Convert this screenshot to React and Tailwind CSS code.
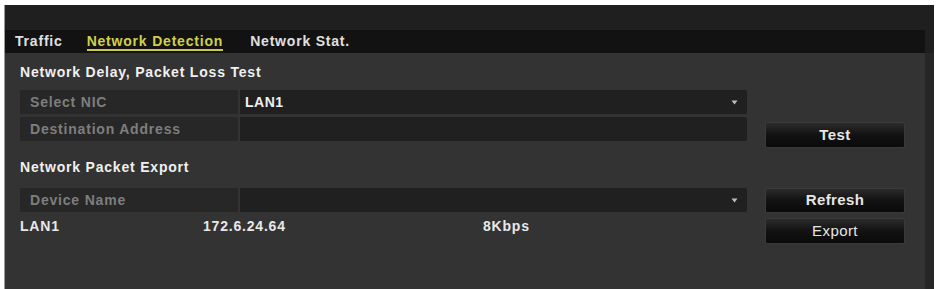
const font = { fontFamily: '"Liberation Sans", Arial, sans-serif' };

function Arrow() {
  return (
    <svg width="7" height="5" viewBox="0 0 7 5" className="shrink-0">
      <path d="M0.5 0.5 L6.5 0.5 L3.5 4.5 Z" fill="#bdbdbd" />
    </svg>
  );
}

function FieldRow({ label, value, dropdown, className = "" }) {
  return (
    <div className={`flex h-[24px] ${className}`}>
      <div className="flex w-[218px] items-center bg-[#272727] pl-[10px] text-[14px] font-bold tracking-[0.8px] text-[#7e7e7e]">
        {label}
      </div>
      <div className="ml-[2px] flex flex-1 items-center rounded-r-[2px] bg-[#202020] pl-[5px] pr-[9px] text-[14px] font-bold tracking-[0.5px] text-[#f0f0f0]">
        <span className="flex-1">{value}</span>
        {dropdown && <Arrow />}
      </div>
    </div>
  );
}

function Btn({ children, className = "" }) {
  return (
    <button
      type="button"
      className={`flex w-[140px] items-center justify-center rounded-[2px] border border-[#3a3a3a] bg-gradient-to-b from-[#2c2c2c] via-[#121212] to-[#0a0a0a] text-[15px] font-bold tracking-[0.4px] text-[#e6e6e6] ${className}`}
    >
      {children}
    </button>
  );
}

export default function App() {
  return (
    <div className="h-[289px] w-[940px] overflow-hidden bg-white pl-[4px] pr-[6px] pt-[5px]" style={font}>
      <div className="flex h-full flex-col border-l border-[#9a9a9a] bg-[#1f1f1f]">
        <div className="h-[25px]" />
        <div className="mr-[9px] flex h-[23px] items-center bg-[#121212] pl-[10px] text-[14px] font-bold tracking-[0.8px]">
          <span className="text-[#e0e0e0]">Traffic</span>
          <span className="ml-[24px] border-b-2 border-[#c9c94a] leading-[16px] text-[#cfd04a]">Network Detection</span>
          <span className="ml-[27px] text-[#e0e0e0]">Network Stat.</span>
        </div>
        <div className="flex flex-1">
          <div className="flex-1 bg-[#333333] pl-[15px] pt-[10px]">
            <div className="flex h-[18px] items-center text-[14px] font-bold tracking-[0.8px] text-[#f0f0f0]">
              Network Delay, Packet Loss Test
            </div>
            <div className="mt-[9px] flex">
              <div className="w-[727px]">
                <FieldRow label="Select NIC" value="LAN1" dropdown />
                <FieldRow label="Destination Address" value="" className="mt-[3px]" />
              </div>
              <div className="ml-[18px] pt-[32px]">
                <Btn className="h-[26px]">Test</Btn>
              </div>
            </div>
            <div className="mt-[10px] flex h-[18px] items-center text-[14px] font-bold tracking-[0.8px] text-[#f0f0f0]">
              Network Packet Export
            </div>
            <div className="mt-[12px] flex">
              <div className="w-[727px]">
                <FieldRow label="Device Name" value="" dropdown />
                <div className="flex h-[28px] items-center text-[14px] font-bold tracking-[0.8px] text-[#e8e8e8]">
                  <span className="w-[183px]">LAN1</span>
                  <span className="w-[280px]">172.6.24.64</span>
                  <span>8Kbps</span>
                </div>
              </div>
              <div className="ml-[18px] flex flex-col gap-[5px]">
                <Btn className="h-[25px]">Refresh</Btn>
                <Btn className="h-[26px] font-normal">Export</Btn>
              </div>
            </div>
          </div>
          <div className="w-[9px] bg-[#262626]" />
        </div>
      </div>
    </div>
  );
}
